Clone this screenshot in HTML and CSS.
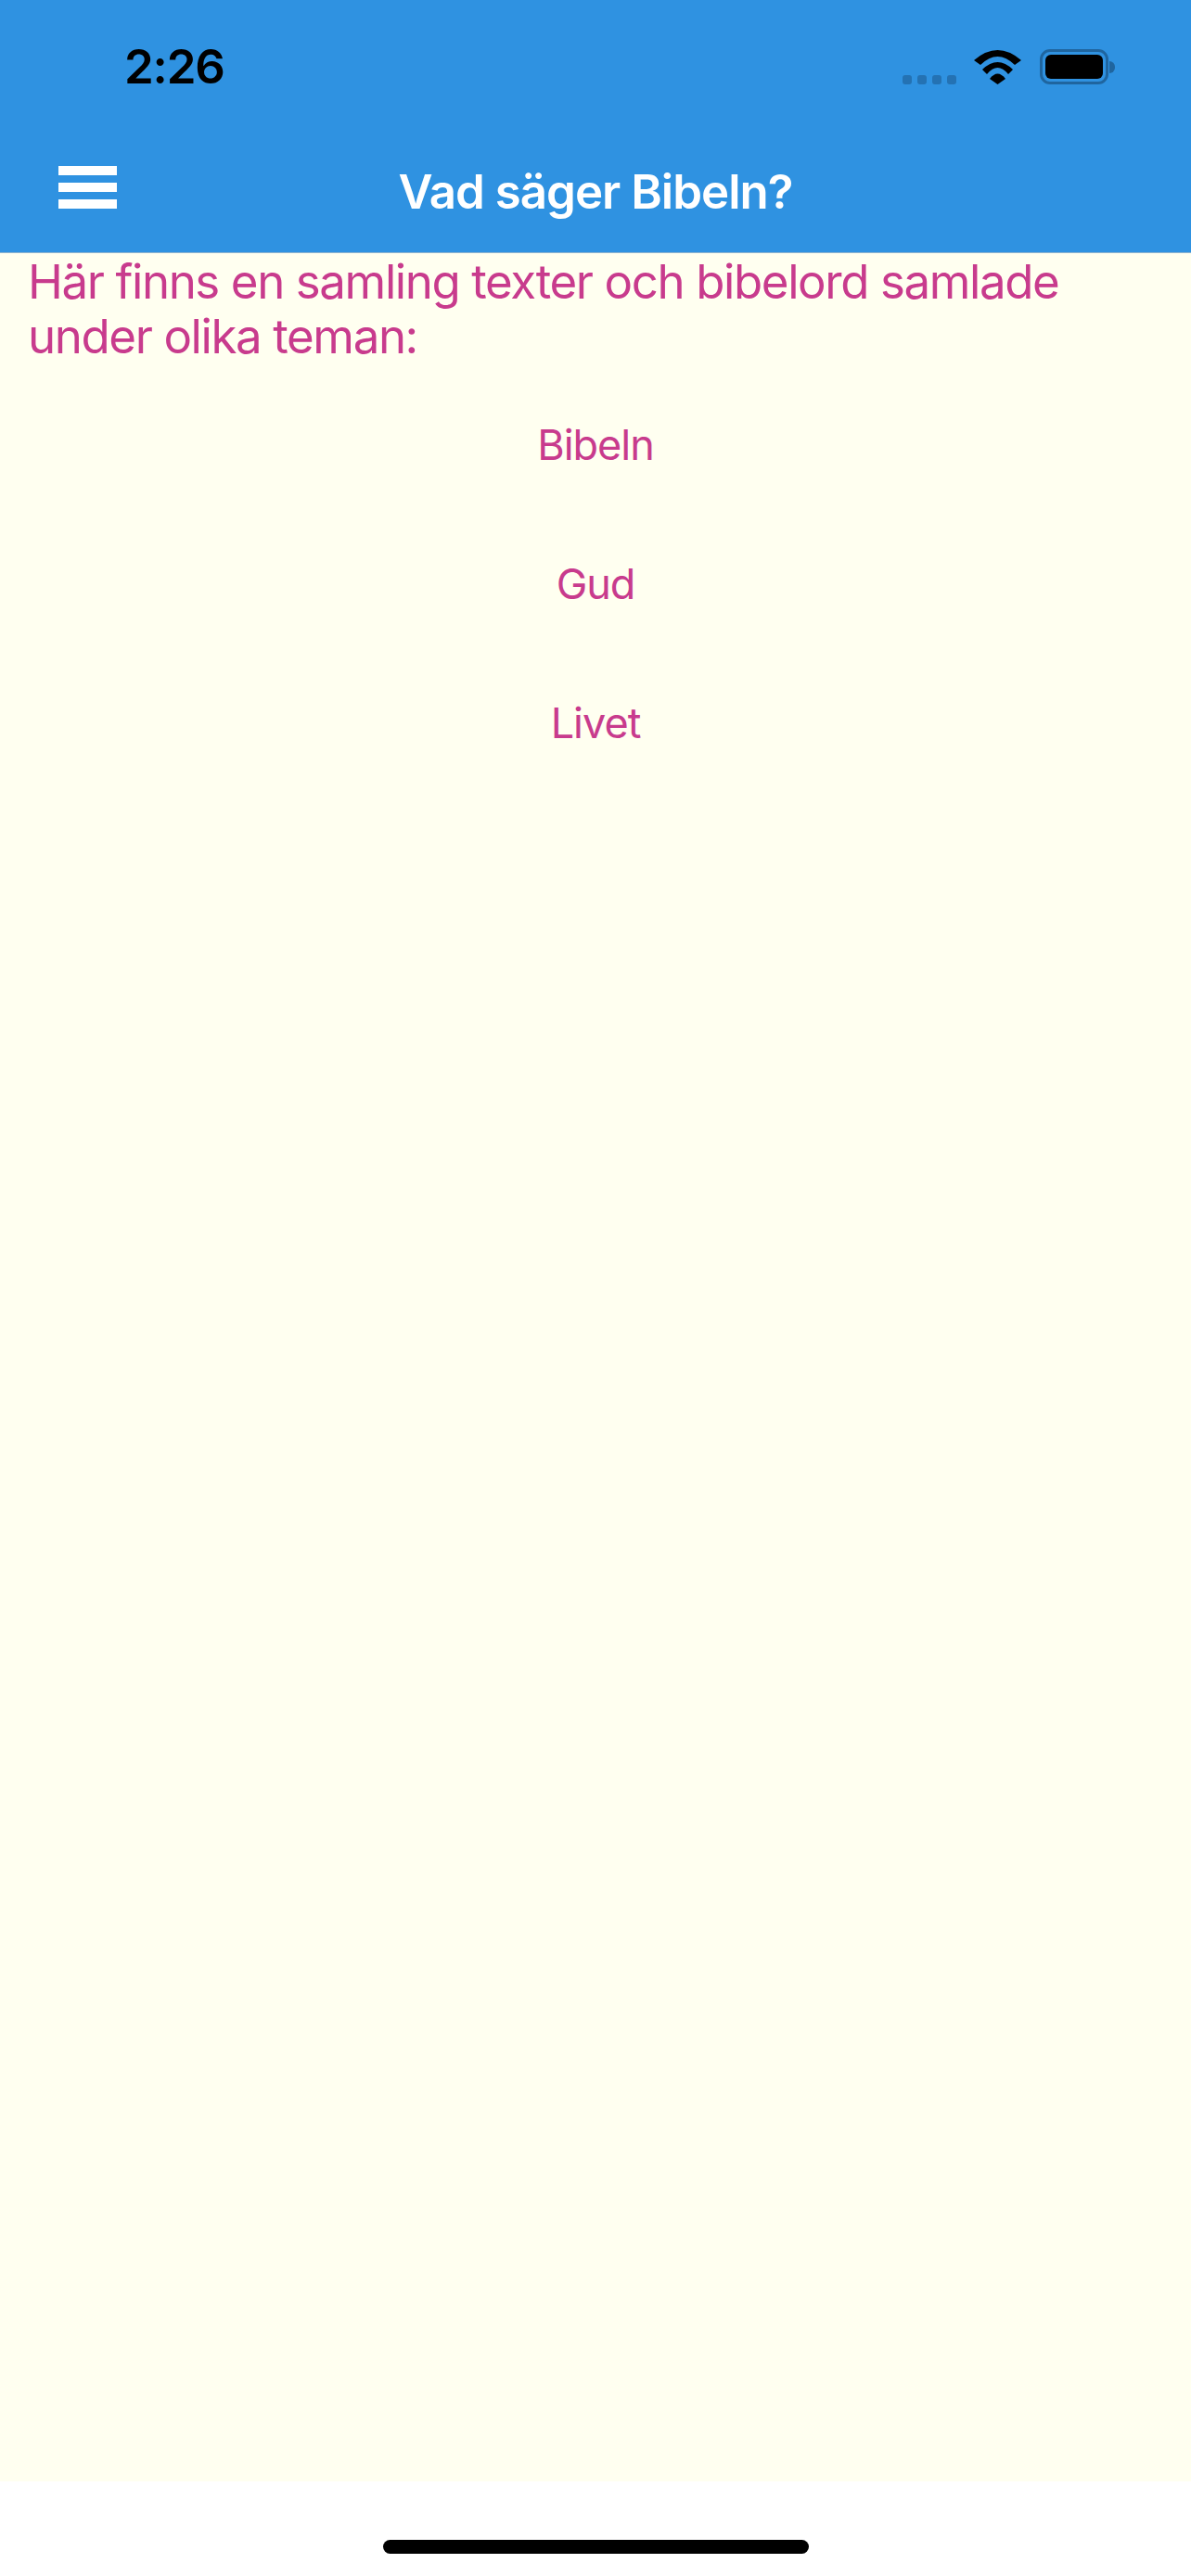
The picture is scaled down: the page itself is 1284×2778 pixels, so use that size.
FILE: index.html
```html
<!DOCTYPE html>
<html lang="sv">
<head>
    <meta charset="UTF-8">
    <meta name="viewport" content="width=device-width, initial-scale=1.0">
    <title>Vad säger Bibeln?</title>
    <link rel="stylesheet" href="styles.css">
</head>
<body>
    <header class="header">
        <div class="status-bar">
            <span class="time">2:26</span>
            <div class="status-icons">
                <div class="signal">
                    <span></span><span></span><span></span><span></span>
                </div>
                <svg class="wifi" viewBox="0 0 51 37" width="51" height="37">
                    <path d="M0 11 Q25.5 -11 51 11 L44 16 Q25.5 -2 7 16 Z"/>
                    <path d="M9 21 Q25.5 5 42 21 L37 26 Q25.5 12 14 26 Z"/>
                    <path d="M17 31 Q25.5 20 34 31 L25.5 37 Z"/>
                </svg>
                <div class="battery">
                    <div class="battery-body"><div class="battery-level"></div></div>
                    <div class="battery-nub"></div>
                </div>
            </div>
        </div>
        <div class="nav-bar">
            <button class="menu-btn" type="button" aria-label="Meny">
                <span></span><span></span><span></span>
            </button>
            <h1 class="title">Vad säger Bibeln?</h1>
        </div>
    </header>

    <main class="content">
        <p class="intro">Här finns en samling texter och bibelord samlade under olika teman:</p>
        <ul class="topics">
            <li>Bibeln</li>
            <li>Gud</li>
            <li>Livet</li>
        </ul>
    </main>

    <footer class="home-area">
        <div class="home-bar"></div>
    </footer>
</body>
</html>
```
FILE: styles.css
```css
* {
    box-sizing: border-box;
}

body {
    margin: 0;
    width: 1284px;
    height: 2778px;
    display: flex;
    flex-direction: column;
    font-family: Inter, "Liberation Sans", sans-serif;
    background-color: #fff;
}

.header {
    height: 273px;
    background-color: #2f92e1;
    border-bottom: 1px solid #8fb4cf;
}

.status-bar {
    height: 144px;
    display: flex;
    justify-content: space-between;
    align-items: flex-start;
    padding: 45px 82px 0 134px;
}

.time {
    font-size: 51px;
    line-height: 54px;
    font-weight: 600;
    letter-spacing: -1.2px;
    color: #000;
}

.status-icons {
    display: flex;
    align-items: flex-end;
    padding-top: 8px;
}

.signal {
    display: flex;
    gap: 6px;
    margin-right: 19px;
}

.signal span {
    width: 10px;
    height: 10px;
    border-radius: 3px;
    background-color: #2472b3;
}

.wifi {
    fill: #000;
    margin-right: 20px;
}

.battery {
    display: flex;
    align-items: center;
}

.battery-body {
    width: 74px;
    height: 38px;
    padding: 3px;
    border: 3px solid #1f659f;
    border-radius: 11px;
}

.battery-level {
    height: 100%;
    background-color: #000;
    border-radius: 6px;
}

.battery-nub {
    width: 6px;
    height: 13px;
    margin-left: 1px;
    background-color: #1f659f;
    border-radius: 0 6px 6px 0;
}

.nav-bar {
    position: relative;
    height: 128px;
    display: flex;
    justify-content: center;
    align-items: center;
}

.menu-btn {
    position: absolute;
    left: 63px;
    top: 35px;
    width: 63px;
    height: 46px;
    padding: 0;
    border: none;
    background: none;
    display: flex;
    flex-direction: column;
    justify-content: space-between;
}

.menu-btn span {
    display: block;
    height: 10px;
    background-color: #fff;
}

.title {
    margin: 0 0 3px;
    font-size: 51px;
    font-weight: 600;
    letter-spacing: -1px;
    color: #fff;
}

.content {
    flex: 1;
    background-color: #fffff0;
    color: #c83b8d;
    padding-top: 1px;
}

.intro {
    margin: 0;
    padding: 0 30px;
    font-size: 51px;
    line-height: 59px;
    letter-spacing: -1.4px;
}

.topics {
    list-style: none;
    margin: 0;
    padding: 0;
    padding-top: 12px;
}

.topics li {
    height: 150px;
    display: flex;
    align-items: center;
    justify-content: center;
    font-size: 45px;
    letter-spacing: -1px;
}

.home-area {
    height: 102px;
    padding-top: 63px;
}

.home-bar {
    width: 459px;
    height: 15px;
    margin-left: 413px;
    background-color: #000;
    border-radius: 8px;
}
```
